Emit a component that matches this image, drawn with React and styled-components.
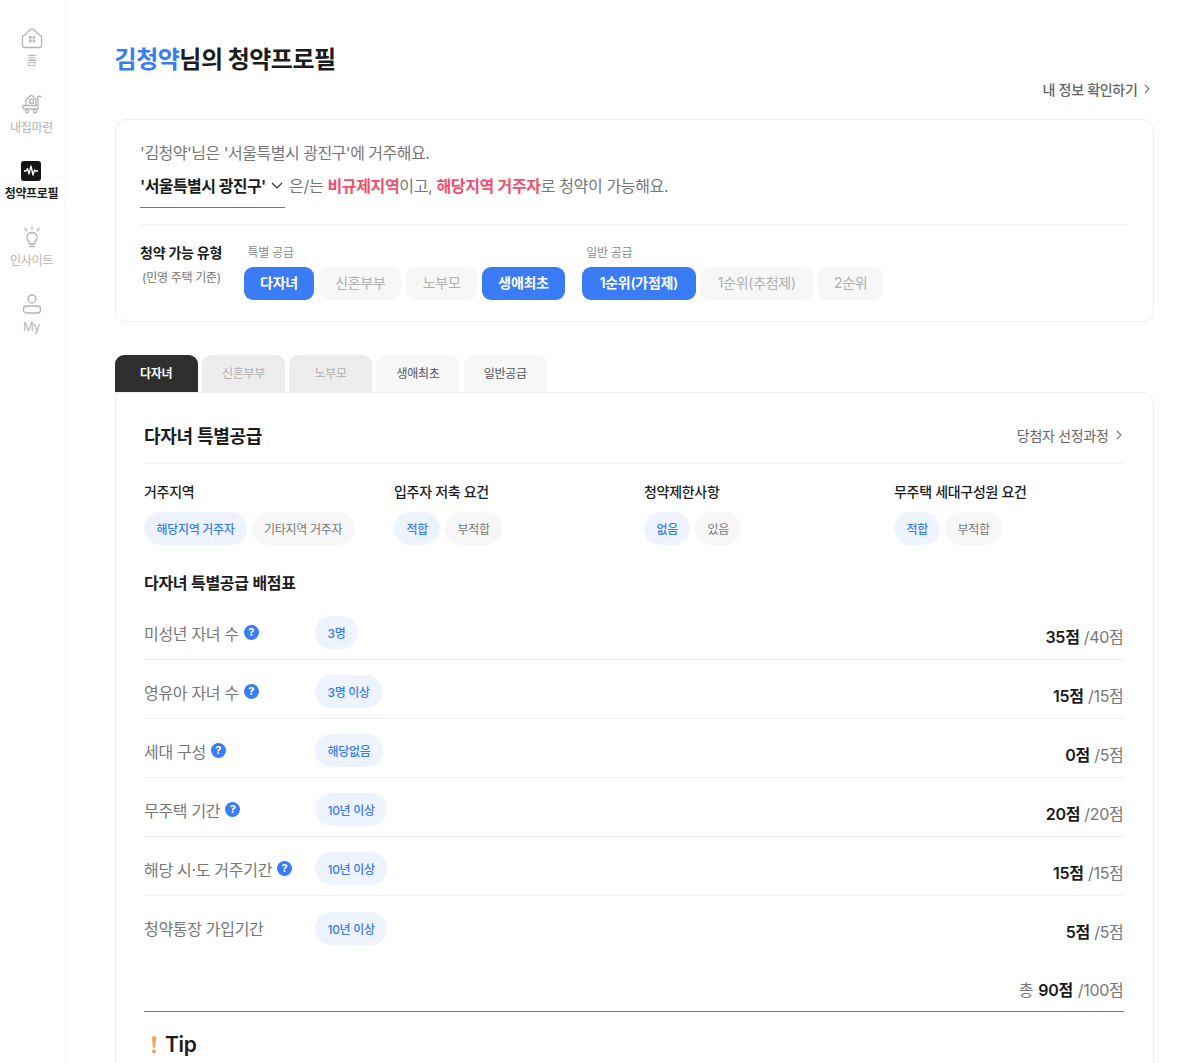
import React from 'react';
import styled, { createGlobalStyle } from 'styled-components';

const GlobalStyle = createGlobalStyle`
  * { box-sizing: border-box; }
  html, body { margin: 0; padding: 0; background: #fff; }
  body {
    font-family: Inter, "Noto Sans CJK KR", "Noto Sans", sans-serif;
    color: #1c1c1c;
    letter-spacing: -0.3px;
  }
`;

const Page = styled.div`
  display: flex;
  height: 100vh;
  overflow: hidden;
`;

const Sidebar = styled.nav`
  flex: 0 0 66px;
  border-right: 1px solid #f1f1f1;
  padding: 26.5px 2px 0 0;
  display: flex;
  flex-direction: column;
  align-items: center;
`;
const NavItem = styled.div`
  height: 66.5px;
  display: flex;
  flex-direction: column;
  align-items: center;
  gap: 4.5px;
  font-size: 12px;
  line-height: 16px;
  white-space: nowrap;
  color: ${props => (props.active ? '#1c1c1c' : '#b4b4b4')};
  font-weight: ${props => (props.active ? 600 : 400)};
  svg { display: block; }
`;

const Main = styled.main`
  flex: 1;
  min-width: 0;
  padding: 42px 46.5px 0 48.6px;
`;
const Title = styled.h1`
  margin: 0;
  font-size: 24px;
  line-height: 36px;
  font-weight: 700;
  letter-spacing: -0.5px;
  span { color: #3a7bf6; }
`;
const InfoLink = styled.div`
  display: flex;
  justify-content: flex-end;
  align-items: center;
  gap: 4px;
  padding-right: 2px;
  height: 22px;
  font-size: 14px;
  font-weight: 500;
  color: #666;
`;

const ProfileCard = styled.section`
  margin-top: 19px;
  height: 203px;
  border: 1px solid #eeeeee;
  border-radius: 12px;
  padding: 20px 25px 0 24.5px;
`;
const Sentence = styled.div`
  font-size: 16px;
  line-height: 26px;
  letter-spacing: -0.5px;
  color: #777;
`;
const SentenceRow = styled(Sentence)`
  display: flex;
  align-items: flex-start;
  margin-top: 7px;
  letter-spacing: -0.35px;
  b { font-weight: 600; color: #f0506e; }
`;
const RegionSelect = styled.div`
  display: flex;
  align-items: center;
  gap: 5px;
  width: 145px;
  height: 35px;
  margin-right: 4px;
  padding-bottom: 9px;
  border-bottom: 1px solid #777;
  font-size: 16px;
  font-weight: 600;
  letter-spacing: -0.6px;
  color: #1c1c1c;
  white-space: nowrap;
`;
const Divider = styled.div`
  height: 1px;
  background: #f0f0f0;
  margin-top: 16px;
`;
const TypeRow = styled.div`
  display: flex;
  margin-top: 20px;
`;
const TypeTitle = styled.div`
  flex: 0 0 103.5px;
  margin-top: -2px;
  font-size: 14px;
  line-height: 20px;
  font-weight: 600;
  small {
    display: block;
    margin-top: 5px;
    padding-left: 2px;
    font-size: 12px;
    font-weight: 400;
    color: #777;
  }
`;
const TypeGroup = styled.div`
  margin-right: 17px;
`;
const GroupLabel = styled.div`
  padding-left: 4px;
  font-size: 12px;
  line-height: 16px;
  color: #8a8a8a;
`;
const Pills = styled.div`
  display: flex;
  gap: 4.8px;
  margin-top: 6px;
`;
const TypePill = styled.div`
  height: 33px;
  padding: 0 ${props => props.pad}px 3px;
  display: flex;
  align-items: center;
  border-radius: 9px;
  font-size: 14px;
  font-weight: ${props => (props.on ? 600 : 400)};
  white-space: nowrap;
  background: ${props => (props.on ? '#3a7bf6' : '#f7f7f7')};
  color: ${props => (props.on ? '#fff' : '#b0b0b0')};
`;

const Tabs = styled.div`
  display: flex;
  gap: 4.3px;
  margin-top: 33px;
`;
const Tab = styled.div`
  width: 83px;
  height: 37px;
  padding-bottom: 2px;
  display: flex;
  align-items: center;
  justify-content: center;
  border-radius: 9px 9px 0 0;
  font-size: 12px;
  font-weight: ${props => (props.kind === 'active' ? 600 : 400)};
  background: ${props => ({ active: '#2f2f2f', off: '#ededed' }[props.kind] || '#f7f7f7')};
  color: ${props => ({ active: '#fff', off: '#b0b0b0' }[props.kind] || '#555')};
`;

const Panel = styled.section`
  border: 1px solid #eeeeee;
  border-radius: 0 12px 0 0;
  padding: 25px 29px 60px 28.4px;
`;
const PanelHead = styled.div`
  display: flex;
  justify-content: space-between;
  align-items: center;
  height: 46px;
  padding-bottom: 12px;
  border-bottom: 1px solid #f0f0f0;
  h2 {
    margin: 0;
    font-size: 18px;
    font-weight: 600;
  }
`;
const ProcessLink = styled.div`
  display: flex;
  align-items: center;
  gap: 5px;
  font-size: 14px;
  color: #666;
`;
const Requirements = styled.div`
  display: grid;
  grid-template-columns: repeat(4, 250px);
  margin-top: 18px;
`;
const ReqLabel = styled.div`
  font-size: 14px;
  line-height: 20px;
  font-weight: 500;
`;
const Chips = styled.div`
  display: flex;
  gap: 4.5px;
  margin-top: 10px;
`;
const Chip = styled.div`
  height: 33px;
  padding: 0 12.5px;
  display: flex;
  align-items: center;
  border-radius: 17px;
  font-size: 12px;
  letter-spacing: -0.3px;
  font-weight: ${props => (props.on ? 500 : 400)};
  white-space: nowrap;
  background: ${props => (props.on ? '#edf4ff' : '#f7f7f7')};
  color: ${props => (props.on ? '#3a7bf6' : '#777')};
`;
const TableTitle = styled.h3`
  margin: 27px 0 0;
  font-size: 16px;
  line-height: 22px;
  font-weight: 600;
`;
const ScoreList = styled.div`
  margin-top: 7px;
`;
const ScoreRow = styled.div`
  height: 59px;
  display: flex;
  align-items: center;
  padding-top: 5px;
  border-bottom: ${props => (props.last ? 'none' : '1px solid #f0f0f0')};
`;
const RowLabel = styled.div`
  flex: 0 0 171px;
  display: flex;
  align-items: center;
  gap: 5px;
  font-size: 16px;
  color: #777;
`;
const HelpDot = styled.span`
  width: 15px;
  height: 15px;
  border-radius: 50%;
  background: #3a7bf6;
  color: #fff;
  font-size: 11px;
  font-weight: 700;
  line-height: 15px;
  text-align: center;
  letter-spacing: 0;
`;
const Score = styled.div`
  margin-left: auto;
  padding-top: 6px;
  font-size: 16px;
  color: #777;
  b { font-weight: 600; color: #1c1c1c; }
`;
const Total = styled.div`
  display: flex;
  justify-content: flex-end;
  align-items: center;
  gap: 5px;
  height: 57px;
  padding-top: 12px;
  border-bottom: 1px solid #777;
  font-size: 16px;
  color: #777;
  b { font-weight: 600; color: #1c1c1c; }
`;
const Tip = styled.div`
  display: flex;
  align-items: center;
  gap: 8px;
  margin-top: 18px;
  padding-left: 7px;
  font-size: 21px;
  line-height: 30px;
  font-weight: 600;
`;

const Chevron = ({ size = 10 }) => (
  <svg width={size} height={size} viewBox="0 0 10 10" fill="none" stroke="#777" strokeWidth="1.1">
    <path d="M3 1l4 4-4 4" />
  </svg>
);

const navIcons = {
  home: (
    <svg width="22" height="22" viewBox="0 0 22 22" fill="none" stroke="#b4b4b4" strokeWidth="1.3">
      <path d="M1.5 9.5L11 1.5l9.5 8V19a1.5 1.5 0 0 1-1.5 1.5H3A1.5 1.5 0 0 1 1.5 19z" strokeLinejoin="round" />
      <rect x="8" y="9" width="2.6" height="2.6" fill="#b4b4b4" stroke="none" />
      <rect x="11.6" y="9" width="2.6" height="2.6" fill="#b4b4b4" stroke="none" />
      <rect x="8" y="12.6" width="2.6" height="2.6" fill="#b4b4b4" stroke="none" />
      <rect x="11.6" y="12.6" width="2.6" height="2.6" fill="#b4b4b4" stroke="none" />
    </svg>
  ),
  cart: (
    <svg width="22" height="22" viewBox="0 0 22 22" fill="none" stroke="#b4b4b4" strokeWidth="1.3">
      <path d="M5 12V6.5L10.5 2 15 6.5V12" strokeLinejoin="round" />
      <path d="M8.5 10V8a2 2 0 0 1 4 0v2z" />
      <path d="M2 12.5h15V16H3.5A1.5 1.5 0 0 1 2 14.5zM17 16V3.5h3" strokeLinecap="round" />
      <circle cx="6" cy="18.5" r="1.6" />
      <circle cx="14" cy="18.5" r="1.6" />
    </svg>
  ),
  wave: (
    <svg width="20" height="22" viewBox="0 -1 20 22">
      <rect width="20" height="20" rx="3" fill="#161616" />
      <path d="M3 10h2l1.5-2.5L8 13l2-8 2 9 1.5-5 1 1H17" fill="none" stroke="#fff" strokeWidth="1.3" strokeLinejoin="round" />
    </svg>
  ),
  bulb: (
    <svg width="22" height="22" viewBox="0 0 22 22" fill="none" stroke="#b4b4b4" strokeWidth="1.3" strokeLinecap="round">
      <path d="M11 6.5a5 5 0 0 0-3 9v2.5h6v-2.5a5 5 0 0 0-3-9z" strokeLinejoin="round" />
      <path d="M8.5 20.5h5M11 1v2.5M4 2.5l1.8 2.2M18 2.5l-1.8 2.2" />
    </svg>
  ),
  user: (
    <svg width="22" height="22" viewBox="0 0 22 22" fill="none" stroke="#b4b4b4" strokeWidth="1.3">
      <circle cx="11" cy="6" r="4" />
      <rect x="2.5" y="13" width="17" height="7" rx="3" />
    </svg>
  ),
};

const NAV = [
  { icon: 'home', label: '홈' },
  { icon: 'cart', label: '내집마련' },
  { icon: 'wave', label: '청약프로필', active: true },
  { icon: 'bulb', label: '인사이트' },
  { icon: 'user', label: 'My' },
];

const SPECIAL = [
  { label: '다자녀', on: true, pad: 16.5 },
  { label: '신혼부부', pad: 16 },
  { label: '노부모', pad: 16.5 },
  { label: '생애최초', on: true, pad: 16.5 },
];
const GENERAL = [
  { label: '1순위(가점제)', on: true, pad: 17.5 },
  { label: '1순위(추첨제)', pad: 17.5 },
  { label: '2순위', pad: 16 },
];
const TABS = [
  { label: '다자녀', kind: 'active' },
  { label: '신혼부부', kind: 'off' },
  { label: '노부모', kind: 'off' },
  { label: '생애최초' },
  { label: '일반공급' },
];
const REQUIREMENTS = [
  { title: '거주지역', on: '해당지역 거주자', off: '기타지역 거주자' },
  { title: '입주자 저축 요건', on: '적합', off: '부적합' },
  { title: '청약제한사항', on: '없음', off: '있음' },
  { title: '무주택 세대구성원 요건', on: '적합', off: '부적합' },
];
const SCORES = [
  { label: '미성년 자녀 수', help: true, value: '3명', score: 35, max: 40 },
  { label: '영유아 자녀 수', help: true, value: '3명 이상', score: 15, max: 15 },
  { label: '세대 구성', help: true, value: '해당없음', score: 0, max: 5 },
  { label: '무주택 기간', help: true, value: '10년 이상', score: 20, max: 20 },
  { label: '해당 시·도 거주기간', help: true, value: '10년 이상', score: 15, max: 15 },
  { label: '청약통장 가입기간', value: '10년 이상', score: 5, max: 5 },
];

export default function App() {
  return (
    <Page>
      <GlobalStyle />
      <Sidebar>
        {NAV.map(n => (
          <NavItem key={n.label} active={n.active}>
            {navIcons[n.icon]}
            {n.label}
          </NavItem>
        ))}
      </Sidebar>
      <Main>
        <Title><span>김청약</span>님의 청약프로필</Title>
        <InfoLink>내 정보 확인하기 <Chevron /></InfoLink>

        <ProfileCard>
          <Sentence>'김청약'님은 '서울특별시 광진구'에 거주해요.</Sentence>
          <SentenceRow>
            <RegionSelect>
              '서울특별시 광진구'
              <svg width="12" height="8" viewBox="0 0 12 8" fill="none" stroke="#333" strokeWidth="1.2"><path d="M1 1l5 5 5-5" /></svg>
            </RegionSelect>
            은/는&nbsp;<b>비규제지역</b>이고,&nbsp;<b>해당지역 거주자</b>로 청약이 가능해요.
          </SentenceRow>
          <Divider />
          <TypeRow>
            <TypeTitle>청약 가능 유형<small>(민영 주택 기준)</small></TypeTitle>
            <TypeGroup>
              <GroupLabel>특별 공급</GroupLabel>
              <Pills>
                {SPECIAL.map(p => <TypePill key={p.label} on={p.on} pad={p.pad}>{p.label}</TypePill>)}
              </Pills>
            </TypeGroup>
            <TypeGroup>
              <GroupLabel>일반 공급</GroupLabel>
              <Pills>
                {GENERAL.map(p => <TypePill key={p.label} on={p.on} pad={p.pad}>{p.label}</TypePill>)}
              </Pills>
            </TypeGroup>
          </TypeRow>
        </ProfileCard>

        <Tabs>
          {TABS.map(t => <Tab key={t.label} kind={t.kind}>{t.label}</Tab>)}
        </Tabs>
        <Panel>
          <PanelHead>
            <h2>다자녀 특별공급</h2>
            <ProcessLink>당첨자 선정과정 <Chevron /></ProcessLink>
          </PanelHead>
          <Requirements>
            {REQUIREMENTS.map(r => (
              <div key={r.title}>
                <ReqLabel>{r.title}</ReqLabel>
                <Chips>
                  <Chip on>{r.on}</Chip>
                  <Chip>{r.off}</Chip>
                </Chips>
              </div>
            ))}
          </Requirements>
          <TableTitle>다자녀 특별공급 배점표</TableTitle>
          <ScoreList>
            {SCORES.map((s, i) => (
              <ScoreRow key={s.label} last={i === SCORES.length - 1}>
                <RowLabel>
                  {s.label}
                  {s.help && <HelpDot>?</HelpDot>}
                </RowLabel>
                <Chip on>{s.value}</Chip>
                <Score><b>{s.score}점</b> /{s.max}점</Score>
              </ScoreRow>
            ))}
          </ScoreList>
          <Total>총 <b>90점</b> /100점</Total>
          <Tip>
            <svg width="6" height="18" viewBox="0 0 6 18"><path d="M.8 2a2.2 2 0 0 1 4.4 0L4 11.5H2z" fill="#f5a55a" /><circle cx="3" cy="15.5" r="2" fill="#f5a55a" /></svg>
            Tip
          </Tip>
        </Panel>
      </Main>
    </Page>
  );
}
